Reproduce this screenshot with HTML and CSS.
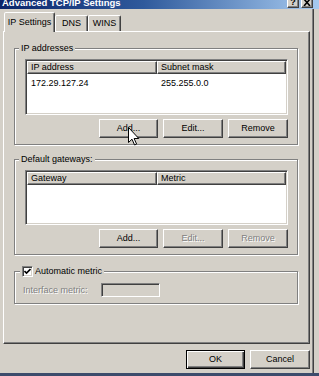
FILE: index.html
```html
<!DOCTYPE html>
<html>
<head>
<meta charset="utf-8">
<link rel="stylesheet" href="styles.css">
</head>
<body>
<div class="win">
  <div class="titlebar">
    <span class="title">Advanced TCP/IP Settings</span>
    <div class="tbtns">
      <span class="tbtn">?</span>
      <span class="tbtn">
        <svg width="8" height="7" viewBox="0 0 8 7"><path d="M1 0L7 7M7 0L1 7" stroke="#000" stroke-width="1.6"/></svg>
      </span>
    </div>
  </div>
  <div class="client">
    <div class="tabs">
      <div class="tab active">IP Settings</div>
      <div class="tab t-dns">DNS</div>
      <div class="tab t-wins">WINS</div>
    </div>
    <div class="panel">
      <fieldset class="group g1">
        <legend>IP addresses</legend>
        <div class="list l1">
          <div class="lhead">
            <div class="hcell c1">IP address</div>
            <div class="hcell c2">Subnet mask</div>
          </div>
          <div class="lrow">
            <span class="c1">172.29.127.24</span>
            <span class="c2">255.255.0.0</span>
          </div>
        </div>
        <div class="btns">
          <div class="btn w59">Add...</div>
          <div class="btn w60">Edit...</div>
          <div class="btn w60">Remove</div>
        </div>
      </fieldset>

      <fieldset class="group g2">
        <legend>Default gateways:</legend>
        <div class="list l2">
          <div class="lhead">
            <div class="hcell c1">Gateway</div>
            <div class="hcell c2">Metric</div>
          </div>
        </div>
        <div class="btns">
          <div class="btn w59">Add...</div>
          <div class="btn w60 disabled">Edit...</div>
          <div class="btn w60 disabled">Remove</div>
        </div>
      </fieldset>

      <fieldset class="group g3">
        <legend class="chklegend">
          <span class="chk">
            <svg width="7" height="7" viewBox="0 0 7 7"><path d="M0.5 3L2.5 5L6.5 1" fill="none" stroke="#000" stroke-width="1.6"/></svg>
          </span>
          <span>Automatic metric</span>
        </legend>
        <div class="metric">
          <span class="mlabel">Interface metric:</span>
          <span class="minput"></span>
        </div>
      </fieldset>
    </div>
    <div class="footer">
      <div class="btn w59 default">OK</div>
      <div class="btn w60">Cancel</div>
    </div>
  </div>
</div>
<div class="taskbar"></div>
<svg class="cursor" width="12" height="19" viewBox="0 0 12 19"><path d="M0.5 0.5L0.5 15.5L4 12.2L6.6 18L8.6 17.1L6.1 11.5L10.8 11.5Z" fill="#fff" stroke="#000" stroke-width="1"/></svg>
</body>
</html>
```

FILE: styles.css
```css
* { box-sizing: border-box; }
html, body { margin: 0; padding: 0; }
body {
  position: relative;
  width: 319px;
  height: 376px;
  overflow: hidden;
  background: #d4d0c8;
  font-family: "Liberation Sans", Arial, sans-serif;
  font-size: 9px;
  color: #000;
}
.win {
  height: 373px;
  display: flex;
  flex-direction: column;
}
.titlebar {
  height: 9px;
  flex: none;
  background: linear-gradient(to right, #0a246a 0%, #2f5a9c 45%, #a6caf0 100%);
  display: flex;
  justify-content: space-between;
  overflow: hidden;
}
.title {
  color: #fff;
  font-weight: bold;
  font-size: 9.5px;
  line-height: 10px;
  margin-top: -2px;
  padding-left: 2px;
  white-space: nowrap;
}
.tbtns {
  display: flex;
  gap: 2px;
  padding-right: 6px;
  margin-top: -3px;
}
.tbtn {
  width: 12px;
  height: 11px;
  background: #d4d0c8;
  border: 1px solid;
  border-color: #fff #404040 #404040 #fff;
  box-shadow: inset -1px -1px #808080;
  font-weight: bold;
  font-size: 9px;
  line-height: 9px;
  text-align: center;
  display: flex;
  align-items: center;
  justify-content: center;
}
.client {
  flex: 1;
  width: 314px;
  padding: 3px 0 0 3px;
  border-right: 1px solid #404040;
  box-shadow: inset -1px 0 #808080;
}
.tabs {
  display: flex;
  align-items: flex-end;
  height: 19px;
  padding-left: 1px;
  position: relative;
  z-index: 1;
}
.tab {
  height: 16px;
  border: 1px solid;
  border-bottom: 0;
  border-color: #fff #404040 transparent #fff;
  box-shadow: inset -1px 0 #808080;
  border-radius: 2px 2px 0 0;
  background: #d4d0c8;
  text-align: center;
  line-height: 15px;
}
.tab.active {
  width: 51px;
  height: 20px;
  margin-bottom: -1px;
  line-height: 18px;
}
.t-dns { width: 33px; }
.t-wins { width: 33px; }
.panel {
  width: 307px;
  height: 313px;
  border: 1px solid;
  border-color: #fff #404040 #404040 #fff;
  box-shadow: inset -1px -1px #808080;
  padding: 11px 0 0 10px;
}
.group {
  margin: 0;
  width: 284px;
  min-width: 0;
  border: 1px solid #808080;
  box-shadow: inset 1px 1px #fff, 1px 1px #fff;
  padding: 5px 9px 6px 10px;
}
.group legend {
  padding: 0 2px;
  margin-left: -6px;
  height: 11px;
  line-height: 11px;
  background: #d4d0c8;
}
.g2 { margin-top: 9px; }
.g3 {
  margin-top: 11px;
  padding: 6px 9px 6px 8px;
}
.list {
  background: #fff;
  border: 1px solid;
  border-color: #808080 #fff #fff #808080;
  box-shadow: inset 1px 1px #404040, inset -1px -1px #d4d0c8;
  padding: 1px;
}
.l1 { height: 56px; }
.l2 { height: 55px; }
.lhead {
  display: flex;
  height: 13px;
}
.hcell {
  height: 13px;
  background: #d4d0c8;
  border: 1px solid;
  border-color: #fff #404040 #404040 #fff;
  box-shadow: inset -1px -1px #808080;
  padding-left: 3px;
  line-height: 11px;
}
.hcell.c1 { width: 130px; }
.hcell.c2 { width: 129px; }
.lrow {
  display: flex;
  padding-top: 3px;
  line-height: 12px;
}
.lrow .c1 { width: 130px; padding-left: 4px; }
.lrow .c2 { padding-left: 4px; }
.btns {
  display: flex;
  justify-content: flex-end;
  gap: 5px;
  margin-top: 4px;
}
.btn {
  height: 19px;
  background: #d4d0c8;
  border: 1px solid;
  border-color: #fff #404040 #404040 #fff;
  box-shadow: inset -1px -1px #808080;
  text-align: center;
  line-height: 17px;
}
.w59 { width: 59px; }
.w60 { width: 60px; }
.btn.disabled {
  color: #808080;
  text-shadow: 1px 1px #fff;
}
.btn.default {
  border: 1px solid #000;
  box-shadow: inset 1px 1px #fff, inset -1px -1px #404040, inset -2px -2px #808080;
}
.chklegend {
  display: flex;
  align-items: center;
  gap: 2px;
  margin-left: -3px !important;
}
.chk {
  width: 11px;
  height: 11px;
  background: #fff;
  border: 1px solid;
  border-color: #808080 #fff #fff #808080;
  box-shadow: inset 1px 1px #404040, inset -1px -1px #d4d0c8;
  display: flex;
  align-items: center;
  justify-content: center;
}
.metric {
  display: flex;
  align-items: center;
}
.mlabel {
  width: 78px;
  color: #808080;
  text-shadow: 1px 1px #fff;
}
.minput {
  width: 59px;
  height: 14px;
  background: #d4d0c8;
  border: 1px solid;
  border-color: #808080 #fff #fff #808080;
  box-shadow: inset 1px 1px #404040, inset -1px -1px #d4d0c8;
}
.footer {
  width: 307px;
  display: flex;
  justify-content: flex-end;
  gap: 5px;
  margin-top: 6px;
}
.taskbar {
  height: 3px;
  background: #3c4c6c;
}
.cursor {
  position: absolute;
  left: 128px;
  top: 127px;
}
```
